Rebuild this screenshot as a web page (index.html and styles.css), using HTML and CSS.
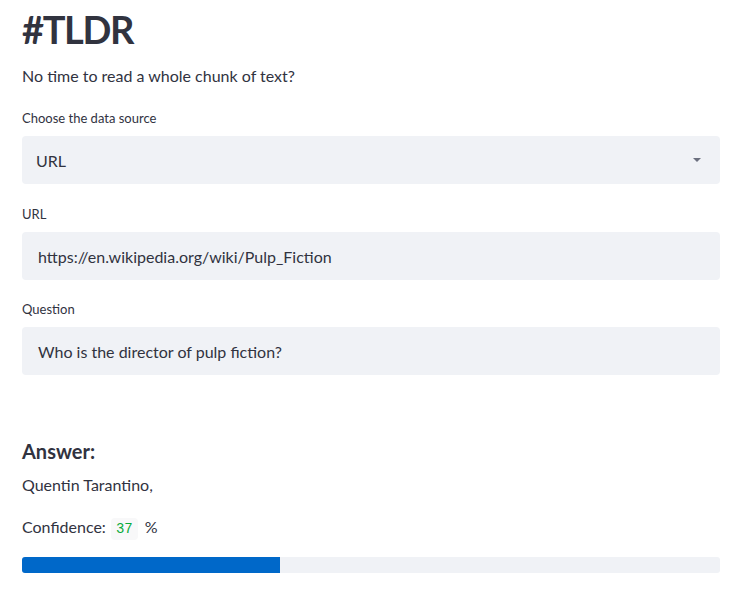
FILE: index.html
```html
<!DOCTYPE html>
<html>
<head>
<meta charset="utf-8">
<link rel="stylesheet" href="styles.css">
</head>
<body>
<main class="app">
  <h1 class="title">#TLDR</h1>
  <p class="lead">No time to read a whole chunk of text?</p>

  <div class="field">
    <label class="label">Choose the data source</label>
    <div class="select">
      <span class="select-value">URL</span>
      <svg class="caret" width="8" height="4" viewBox="0 0 8 4"><path d="M0 0h8L4 4z" fill="#6b6f7e"/></svg>
    </div>
  </div>

  <div class="field">
    <label class="label">URL</label>
    <div class="input">https://en.wikipedia.org/wiki/Pulp_Fiction</div>
  </div>

  <div class="field">
    <label class="label">Question</label>
    <div class="input">Who is the director of pulp fiction?</div>
  </div>

  <h4 class="answer-title">Answer:</h4>
  <p class="answer">Quentin Tarantino,</p>
  <p class="confidence">Confidence: <code class="code">37</code> %</p>
  <div class="progress"><div class="progress-fill" style="width:37%"></div></div>
</main>
</body>
</html>
```
FILE: styles.css
```css
html, body {
  margin: 0;
  padding: 0;
  background: #ffffff;
}
body {
  font-family: Lato, "Open Sans", sans-serif;
  color: #31333f;
}
.app {
  width: 698px;
  padding: 0 18px 0 22px;
  display: flex;
  flex-direction: column;
}
.title {
  margin: 6px 0 0;
  font-size: 38px;
  font-weight: 700;
  line-height: 46px;
  letter-spacing: -1.4px;
}
.lead {
  margin: 12px 0 4px;
  font-size: 16px;
  line-height: 24px;
}
.field {
  display: flex;
  flex-direction: column;
}
.label {
  margin-top: 16px;
  font-size: 13px;
  line-height: 20px;
  margin-bottom: 8px;
}
.field + .field .label {
  margin-top: 20px;
}
.field + .field + .field .label {
  margin-top: 19px;
}
.select, .input {
  height: 48px;
  background: #f0f2f6;
  border-radius: 4px;
  display: flex;
  align-items: center;
  font-size: 16px;
  box-sizing: border-box;
}
.select {
  padding: 0 19px 0 14px;
  justify-content: space-between;
}
.input {
  padding: 0 16px;
}
.answer-title {
  margin: 61px 0 0;
  font-size: 20px;
  font-weight: 700;
  line-height: 30px;
}
.answer {
  margin: 7px 0 0;
  font-size: 16px;
  line-height: 24px;
}
.confidence {
  margin: 18px 0 0;
  font-size: 16px;
  line-height: 24px;
}
.code {
  font-family: "Liberation Mono", monospace;
  font-size: 14px;
  color: #09ab3b;
  background: #f8f8f9;
  border-radius: 4px;
  padding: 3px 5px;
  margin: 0 3px 0 1px;
}
.progress {
  margin-top: 16px;
  height: 16px;
  border-radius: 3px;
  background: #f0f2f6;
  overflow: hidden;
}
.progress-fill {
  height: 100%;
  background: #0068c9;
}
```
